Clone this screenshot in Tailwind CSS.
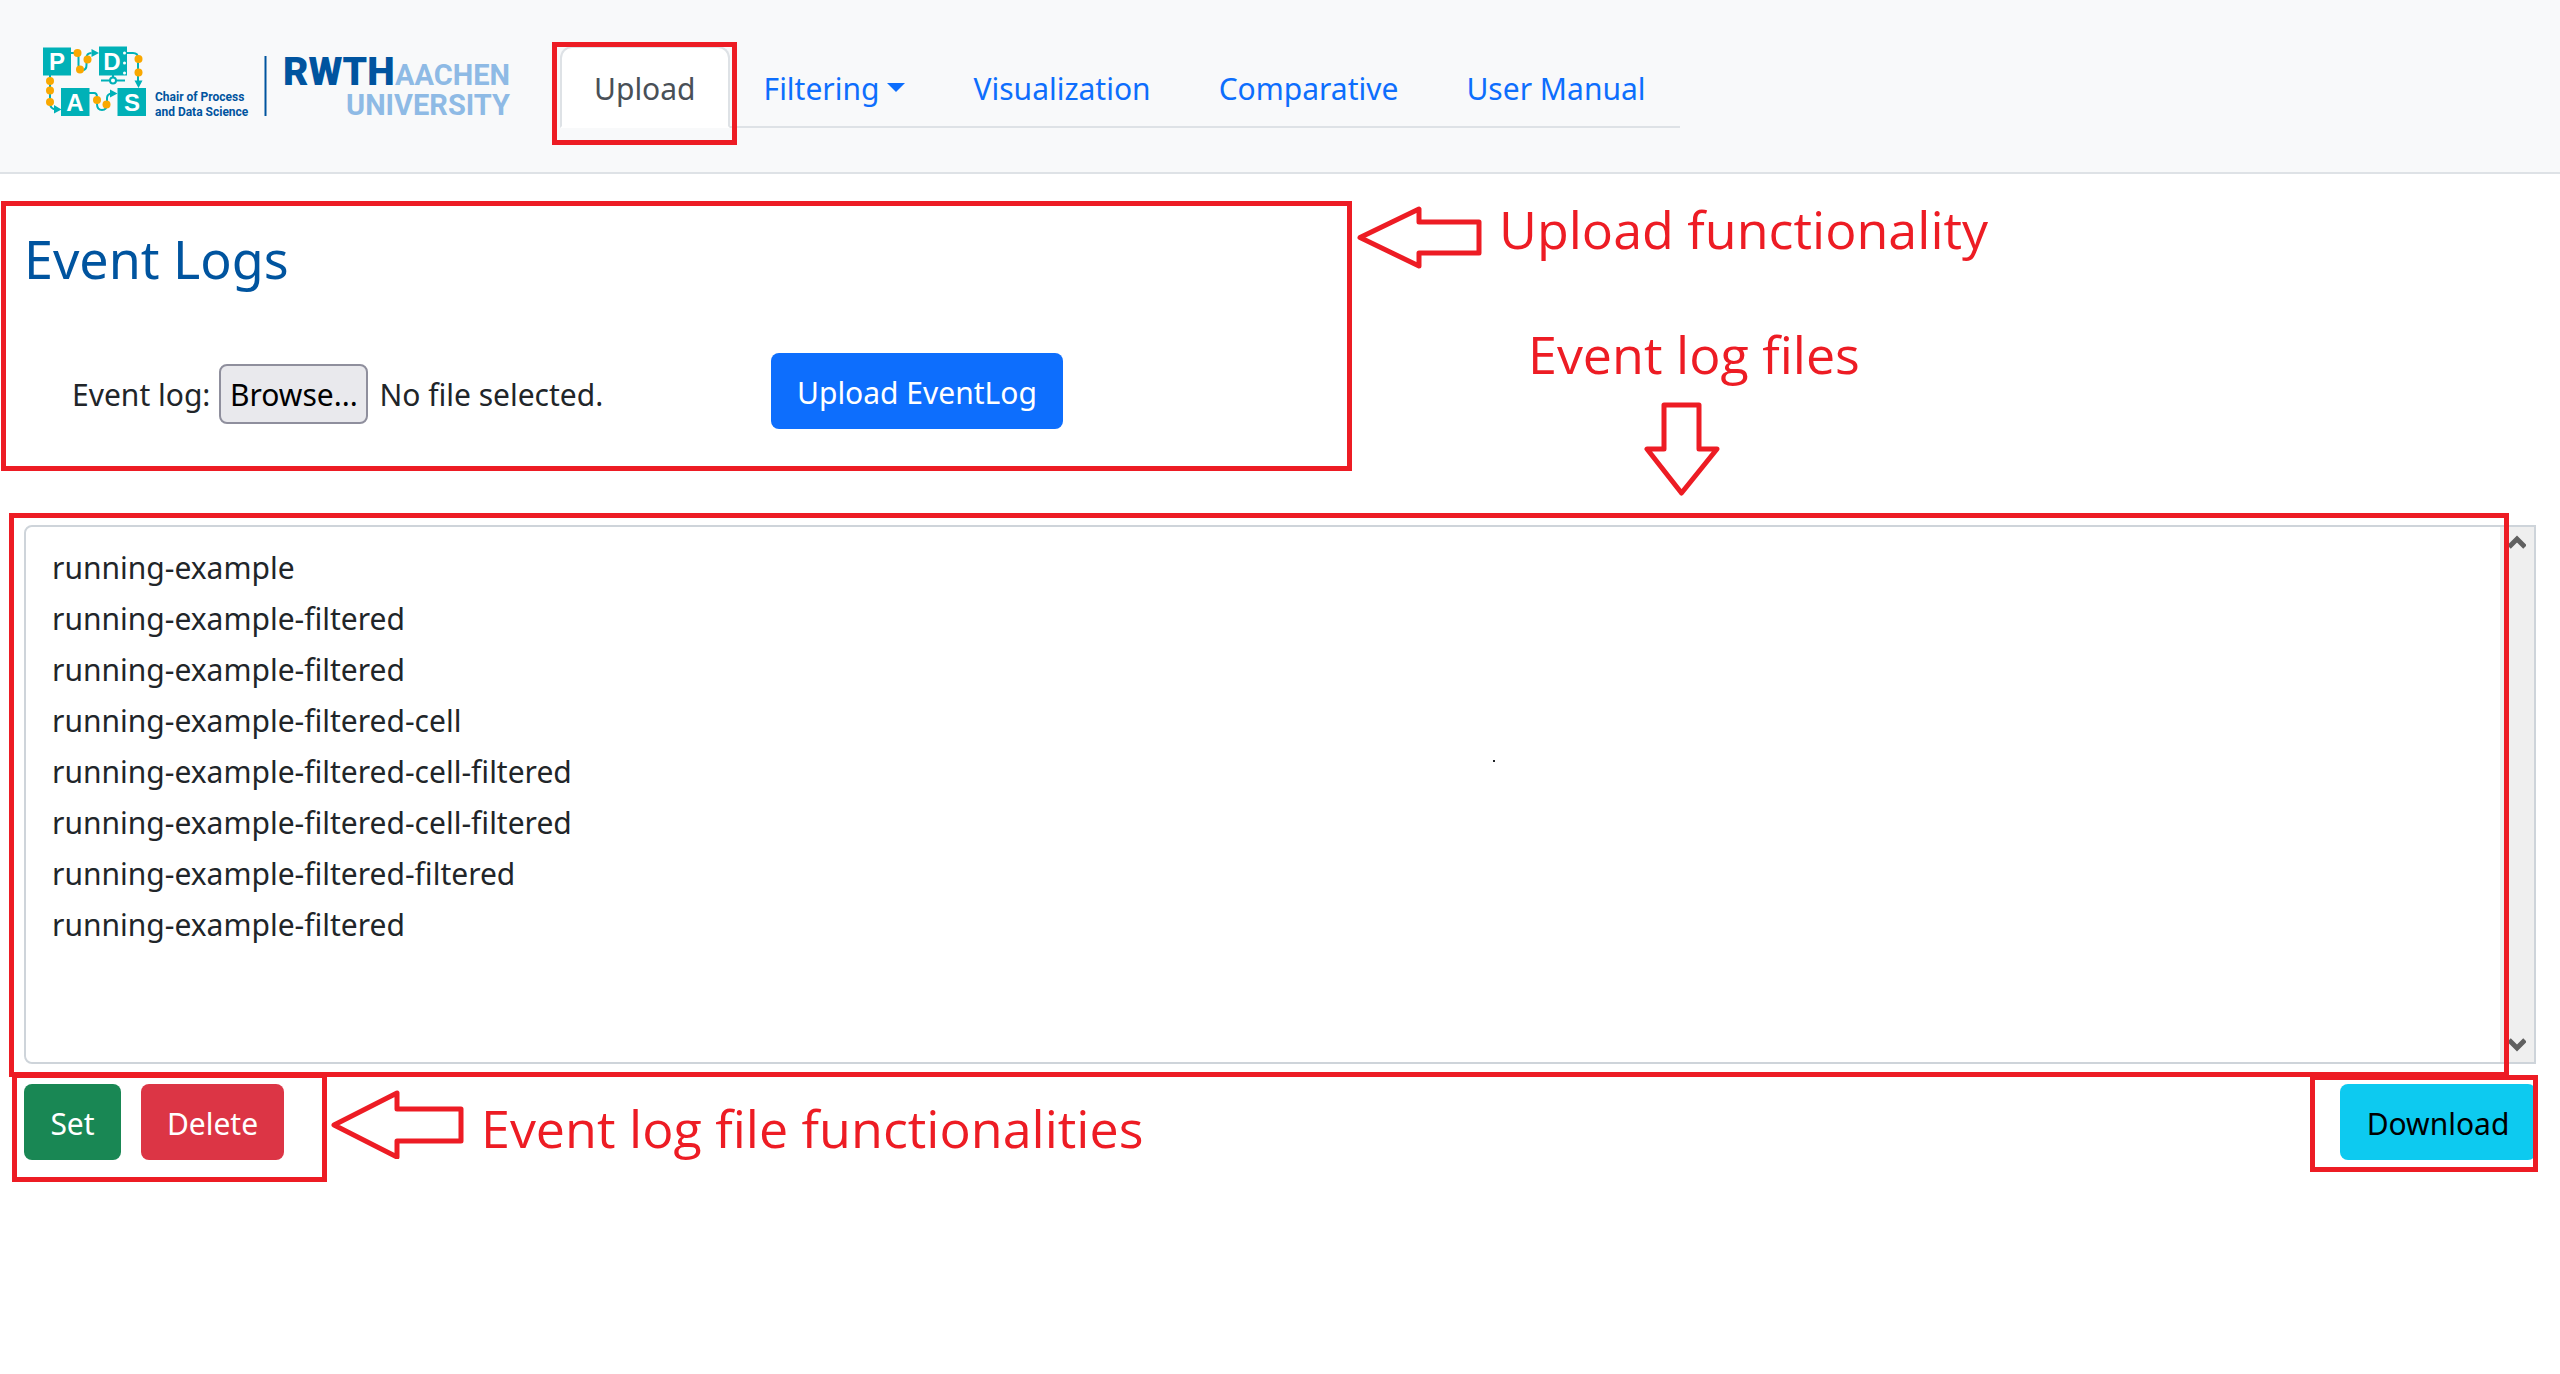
<!DOCTYPE html>
<html lang="en">
<head>
<meta charset="utf-8">
<title>Event Logs</title>
<script src="https://cdn.jsdelivr.net/npm/@tailwindcss/browser@4"></script>
</head>
<body class="min-h-screen bg-white font-['Noto_Sans',sans-serif] text-[30px] leading-[48px] text-[#212529]">
<header class="flex border-b-2 border-[#dee2e6] bg-[#f8f9fa] pt-[46px] pb-[44px] pl-[42px]">
  <a href="#" aria-label="Chair of Process and Data Science, RWTH Aachen University" class="flex shrink-0">
    <svg class="h-[82px] w-[518px]" viewBox="42 46 518 82">
      <g fill="#00b1b7">
        <path d="M43 47.500h28v28H43zM99 46.500h28v29H99zM61 88h28.500v28H61zM117.500 88H146v28h-28.500z"/>
        <path d="M91.500 49l7.500 4-7.500 4zM54 105l7.500 4.500L54 113.500zM110 89.500l7.500 4-7.500 4zM134.500 80.500h8L138.500 88z"/>
      </g>
      <g fill="none" stroke="#00b1b7" stroke-width="2">
        <path d="M71 53h5q2.500 0 2.500 4v8q0 5 4 5 4 0 4-5v-7q0-5 5-5M50 75v28q0 6 6 6.500M89 93h5q3 0 3 4v7q0 6 5 6 5 0 5-6v-6q0-4 5-4.500M127 53h6q5 0 5 5v24M101 80.500h24"/>
        <circle cx="113" cy="80.500" r="3" fill="#fff"/><path d="M113 75v3"/>
      </g>
      <g fill="#f9a800">
        <circle cx="77.500" cy="53" r="4"/><circle cx="87.500" cy="59.500" r="4"/><circle cx="80" cy="69.500" r="4"/>
        <circle cx="50" cy="81" r="4"/><circle cx="50" cy="90.500" r="4"/><circle cx="50" cy="102" r="4"/>
        <circle cx="97" cy="100" r="4"/><circle cx="106.500" cy="104.500" r="4"/>
        <circle cx="138.500" cy="59" r="4"/><circle cx="138.500" cy="72.500" r="4"/>
      </g>
      <g fill="#fff"><circle cx="124.500" cy="53" r="1.500"/><circle cx="124.500" cy="63" r="1.500"/><circle cx="124.500" cy="73" r="1.500"/></g>
      <g class="font-['Liberation_Sans',sans-serif] text-[24px] font-bold" fill="#fff" text-anchor="middle">
        <text x="57" y="70">P</text><text x="112" y="70">D</text><text x="75" y="111">A</text><text x="132" y="111">S</text>
      </g>
      <g class="font-['Roboto',sans-serif] text-[12px] font-bold" fill="#00549f">
        <text x="155" y="101">Chair of Process</text><text x="155" y="116">and Data Science</text>
      </g>
      <path d="M265.500 56v60" stroke="#00549f" stroke-width="2"/>
      <text x="283" y="85" class="font-['Roboto',sans-serif] text-[39px] font-black" fill="#00549f">RWTH</text>
      <g class="font-['Roboto',sans-serif] text-[29px] font-bold" fill="#8ebae5" text-anchor="end">
        <text x="510" y="85">AACHEN</text><text x="510" y="115">UNIVERSITY</text>
      </g>
    </svg>
  </a>
  <nav class="relative">
    <ul class="flex border-b-2 border-[#dee2e6] text-[#0d6efd]">
      <li class="-mb-[2px]"><a href="#" aria-current="page" class="block rounded-t-xl border-2 border-[#dee2e6] border-b-white bg-white px-8 pt-[17px] pb-[13px] text-[#495057]">Upload</a></li>
      <li><a href="#" class="flex items-center gap-2 px-[34px] pt-[19px] pb-[13px]">Filtering<svg class="mb-1 h-[9px] w-[18px]" viewBox="0 0 18 9" fill="currentColor"><path d="M0 0h18L9 9z"/></svg></a></li>
      <li><a href="#" class="block px-[34px] pt-[19px] pb-[13px]">Visualization</a></li>
      <li><a href="#" class="block px-[34px] pt-[19px] pb-[13px]">Comparative</a></li>
      <li><a href="#" class="block px-[34px] pt-[19px] pb-[13px]">User Manual</a></li>
    </ul>
    <div class="pointer-events-none absolute -top-1 -left-2 h-[103px] w-[185px] border-5 border-[#ed1c24]"></div>
  </nav>
</header>
<main>
  <div class="flex items-start pt-[27px] pl-px">
    <section class="w-[1351px] shrink-0 border-5 border-[#ed1c24] px-[18px] pt-[21px] pb-[37px]">
      <h1 class="text-[52px] leading-[64px] text-[#00549f]">Event Logs</h1>
      <form class="mt-[62px] flex items-center pl-12">
        <div class="flex w-[699px] items-center pt-[6px]">
          <label for="log" class="pt-[2px]">Event log:</label>
          <input id="log" type="file" class="sr-only">
          <button type="button" onclick="document.getElementById('log').click()" class="mr-[11px] ml-[9px] h-[60px] w-[149px] rounded-lg border-2 border-[#8f8f9d] bg-[#e9e9ed] pt-[2px] text-black">Browse...</button>
          <span class="pt-[2px]">No file selected.</span>
        </div>
        <button type="button" class="h-[76px] rounded-lg bg-[#0d6efd] px-[26px] pt-1 text-white">Upload EventLog</button>
      </form>
    </section>
    <div class="flex flex-col items-start pl-1 font-['Open_Sans',sans-serif] text-[52px] leading-[64px] whitespace-nowrap text-[#ed1c24]">
      <div class="flex items-start gap-4">
        <svg class="mt-[5px] h-[64px] w-[127px]" viewBox="0 0 127 64" fill="none" stroke="currentColor" stroke-width="5" stroke-linejoin="round"><path d="M4 31.500L63 3v13h60v31H63v13z"/></svg>
        <p class="-mt-1">Upload functionality</p>
      </div>
      <div class="mt-[52px] flex flex-col items-center pl-[172px]">
        <p>Event log files</p>
        <svg class="mt-4 -ml-6 h-[94px] w-[76px]" viewBox="0 0 76 94" fill="none" stroke="currentColor" stroke-width="5" stroke-linejoin="round"><path d="M20 3h35v44h18L37.500 91 3 47h17z"/></svg>
      </div>
    </div>
  </div>
  <div class="relative mx-6 mt-[29px] flex h-[539px] rounded-l-lg border-2 border-[#ced4da]">
    <select multiple aria-label="Event log files" class="h-full flex-1 appearance-none overflow-hidden rounded-l-lg bg-white pt-5 pl-[26px] outline-none">
      <option class="h-[51px] leading-[51px]">running-example</option>
      <option class="h-[51px] leading-[51px]">running-example-filtered</option>
      <option class="h-[51px] leading-[51px]">running-example-filtered</option>
      <option class="h-[51px] leading-[51px]">running-example-filtered-cell</option>
      <option class="h-[51px] leading-[51px]">running-example-filtered-cell-filtered</option>
      <option class="h-[51px] leading-[51px]">running-example-filtered-cell-filtered</option>
      <option class="h-[51px] leading-[51px]">running-example-filtered-filtered</option>
      <option class="h-[51px] leading-[51px]">running-example-filtered</option>
    </select>
    <div class="flex w-[34px] flex-col items-center justify-between bg-[#efefef] pt-2 pb-[10px]">
      <svg class="h-[14px] w-[18px]" viewBox="0 0 18 14" fill="none" stroke="#606060" stroke-width="5"><path d="M1 12l8-8 8 8"/></svg>
      <svg class="h-[14px] w-[18px]" viewBox="0 0 18 14" fill="none" stroke="#606060" stroke-width="5"><path d="M1 2l8 8 8-8"/></svg>
    </div>
    <div class="pointer-events-none absolute -top-[14px] right-[25px] -bottom-[15px] -left-[17px] border-5 border-[#ed1c24]"></div>
    <div class="pointer-events-none absolute top-[233px] left-[1467px] size-[2px] bg-[#212529]"></div>
  </div>
  <div class="mt-5 flex items-center justify-between px-6">
    <div class="flex items-center">
      <div class="relative flex gap-5">
        <button type="button" class="h-[76px] w-[97px] rounded-lg bg-[#198754] pt-1 text-white">Set</button>
        <button type="button" class="h-[76px] w-[143px] rounded-lg bg-[#dc3545] pt-1 text-white">Delete</button>
        <div class="pointer-events-none absolute -top-[11px] -right-[43px] -bottom-[22px] -left-3 border-5 border-[#ed1c24]"></div>
      </div>
      <div class="ml-[46px] flex items-center gap-4 font-['Open_Sans',sans-serif] text-[52px] leading-[64px] text-[#ed1c24]">
        <svg class="mt-1 h-[70px] w-[135px]" viewBox="0 0 135 70" fill="none" stroke="currentColor" stroke-width="5" stroke-linejoin="round"><path d="M4 36L67 4v16h64v32H67v16z"/></svg>
        <p class="mt-3">Event log file functionalities</p>
      </div>
    </div>
    <div class="relative">
      <button type="button" class="h-[76px] w-[196px] rounded-lg bg-[#0dcaf0] pt-1 text-black">Download</button>
      <div class="pointer-events-none absolute -top-[9px] -right-[2px] -bottom-3 -left-[30px] border-5 border-[#ed1c24]"></div>
    </div>
  </div>
</main>
</body>
</html>
